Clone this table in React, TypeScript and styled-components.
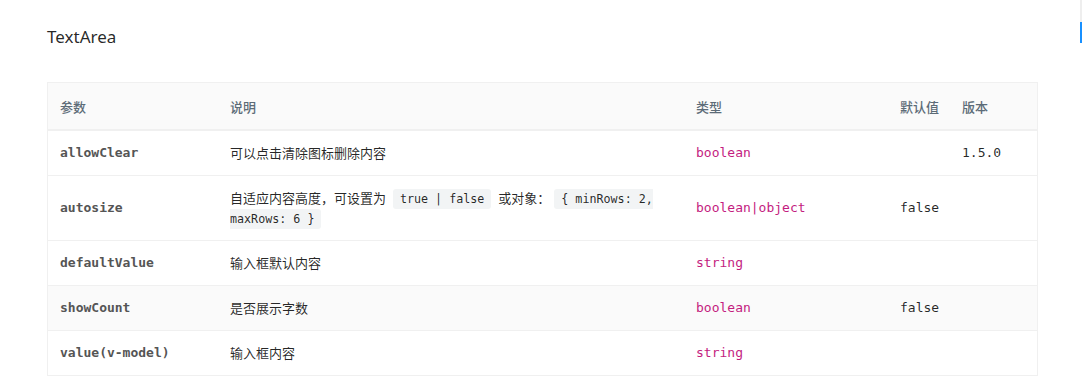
import React from "react";
import styled, { createGlobalStyle } from "styled-components";

const GlobalStyle = createGlobalStyle`
  html, body {
    margin: 0;
    padding: 0;
    background: #ffffff;
  }
  body {
    font-family: "Noto Sans", "Noto Sans CJK SC", sans-serif;
    color: rgba(0, 0, 0, 0.85);
  }
`;

const Page = styled.div`
  position: relative;
  padding: 25px 0 0 47px;
  height: 391px;
  box-sizing: border-box;
  overflow: hidden;
`;

const Title = styled.h2`
  margin: 0 0 33px;
  font-family: "Noto Sans", sans-serif;
  font-size: 17px;
  line-height: 24px;
  font-weight: 400;
  color: rgba(0, 0, 0, 0.85);
`;

const Table = styled.table`
  width: 991px;
  table-layout: fixed;
  border-collapse: separate;
  border-spacing: 0;
  border: 1px solid #f0f0f0;
`;

const HeadCell = styled.th`
  padding: 14px 12px 12px;
  line-height: 20px;
  font-size: 13px;
  font-weight: 500;
  text-align: left;
  white-space: nowrap;
  color: #5c6b77;
  background: #fafafa;
  border-bottom: 1px solid #f0f0f0;
  font-family: "Noto Sans CJK SC", sans-serif;
`;

const Row = styled.tr<{ $shaded?: boolean }>`
  background: ${(p) => (p.$shaded ? "#fafafa" : "#ffffff")};
`;

type Kind = "param" | "desc" | "type" | "plain";

const Cell = styled.td<{ $kind: Kind }>`
  height: 20px;
  padding: 12px;
  line-height: 20px;
  vertical-align: middle;
  white-space: ${(p) => (p.$kind === "desc" ? "normal" : "nowrap")};
  border-top: 1px solid #f0f0f0;
  font-size: 13px;
  font-family: ${(p) =>
    p.$kind === "desc"
      ? `"Noto Sans CJK SC", sans-serif`
      : `"DejaVu Sans Mono", "Liberation Mono", monospace`};
  font-weight: ${(p) => (p.$kind === "param" ? 700 : 400)};
  color: ${(p) =>
    p.$kind === "param"
      ? "#555555"
      : p.$kind === "type"
      ? "#c41d7f"
      : "rgba(0, 0, 0, 0.85)"};
`;

const Code = styled.code`
  margin: 0 4px;
  padding: 3px 7px;
  line-height: 1;
  font-size: 11.7px;
  font-family: "DejaVu Sans Mono", "Liberation Mono", monospace;
  background: #f2f4f5;
  border-radius: 3px;
  color: rgba(0, 0, 0, 0.85);
`;

const TocRail = styled.div`
  position: absolute;
  top: 0;
  left: 1080px;
  width: 2px;
  height: 43px;
  background: #eeeeee;
`;

const TocInk = styled.div`
  margin-top: 22px;
  height: 21px;
  background: #1890ff;
`;

const columns = [170, 466, 204, 62, 87];
const headers = ["参数", "说明", "类型", "默认值", "版本"];

type RowData = {
  param: string;
  desc: React.ReactNode;
  type: string;
  def?: string;
  version?: string;
  shaded?: boolean;
};

const rows: RowData[] = [
  { param: "allowClear", desc: "可以点击清除图标删除内容", type: "boolean", version: "1.5.0" },
  {
    param: "autosize",
    desc: (
      <>
        自适应内容高度，可设置为 <Code>true | false</Code> 或对象：<Code>{"{ minRows: 2, maxRows: 6 }"}</Code>
      </>
    ),
    type: "boolean|object",
    def: "false",
  },
  { param: "defaultValue", desc: "输入框默认内容", type: "string" },
  { param: "showCount", desc: "是否展示字数", type: "boolean", def: "false", shaded: true },
  { param: "value(v-model)", desc: "输入框内容", type: "string" },
];

export default function App() {
  return (
    <>
      <GlobalStyle />
      <Page>
        <Title>TextArea</Title>
        <Table>
          <colgroup>
            {columns.map((w, i) => (
              <col key={i} style={{ width: w }} />
            ))}
          </colgroup>
          <thead>
            <tr>
              {headers.map((h) => (
                <HeadCell key={h}>{h}</HeadCell>
              ))}
            </tr>
          </thead>
          <tbody>
            {rows.map((r) => (
              <Row key={r.param} $shaded={r.shaded}>
                <Cell $kind="param">{r.param}</Cell>
                <Cell $kind="desc">{r.desc}</Cell>
                <Cell $kind="type">{r.type}</Cell>
                <Cell $kind="plain">{r.def}</Cell>
                <Cell $kind="plain">{r.version}</Cell>
              </Row>
            ))}
          </tbody>
        </Table>
        <TocRail>
          <TocInk />
        </TocRail>
      </Page>
    </>
  );
}
